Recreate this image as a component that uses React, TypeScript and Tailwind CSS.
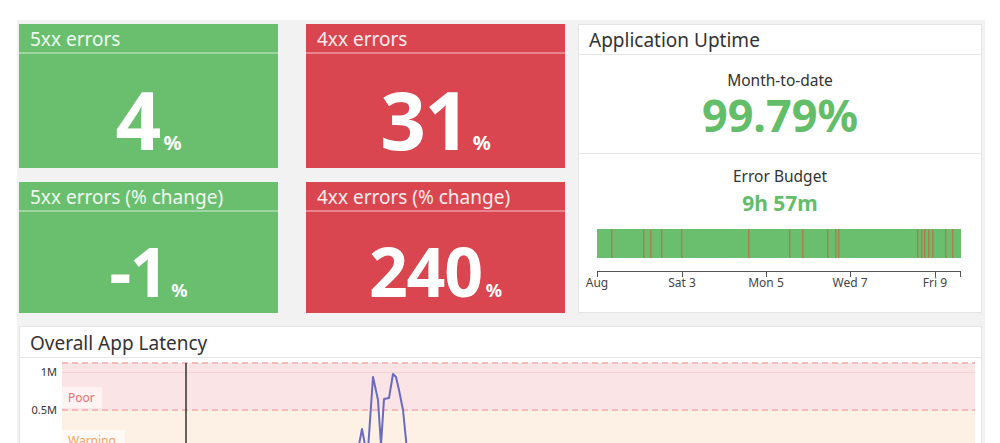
import React from "react"

const GREEN = "bg-[#6abf6e]"
const RED = "bg-[#d9464f]"

interface StatProps {
  title: string
  value: string
  color: string
  big?: boolean
}

function StatCard({ title, value, color, big }: StatProps) {
  return (
    <div className={`${color} flex flex-col text-white`}>
      <div className="h-[30px] px-[11px] pt-[2px] flex items-center text-[19px] text-white/90 border-b-2 border-white/35">
        {title}
      </div>
      <div className={`flex-1 flex items-end justify-center ${big ? "pb-[9px]" : "pb-[8px]"}`}>
        <div className="flex items-baseline">
          <span className={`font-bold leading-none tracking-[-0.02em] ${big ? "text-[80px]" : "text-[68px]"}`}>
            {value}
          </span>
          <span className={`font-bold leading-none ml-[4px] ${big ? "text-[20px]" : "text-[18px]"}`}>%</span>
        </div>
      </div>
    </div>
  )
}

const stripes = [611, 643, 650, 661, 681, 748, 789, 802, 827, 835, 838, 917, 921, 924, 928, 932, 945, 952]
const ticks = [
  { x: 597, label: "Aug" },
  { x: 682, label: "Sat 3" },
  { x: 766, label: "Mon 5" },
  { x: 850, label: "Wed 7" },
  { x: 935, label: "Fri 9" },
]

function BudgetBar() {
  const ox = 585
  return (
    <svg width="390" height="66" className="block">
      <rect x={597 - ox} y="3" width="364" height="29" fill="#6abf6e" />
      {stripes.map((s, i) => (
        <rect key={i} x={s - ox} y="3" width="1.5" height="29" fill="#a8814f" />
      ))}
      <line x1={597 - ox} y1="45.5" x2={961 - ox} y2="45.5" stroke="#555" strokeWidth="1" />
      {ticks.map((t) => (
        <g key={t.label}>
          <line x1={t.x - ox + 0.5} y1="45" x2={t.x - ox + 0.5} y2="51" stroke="#555" strokeWidth="1" />
          <text x={t.x - ox} y="61" textAnchor="middle" fontSize="12" fill="#444">
            {t.label}
          </text>
        </g>
      ))}
      <line x1={961 - ox - 0.5} y1="45" x2={961 - ox - 0.5} y2="51" stroke="#555" strokeWidth="1" />
    </svg>
  )
}

function UptimeCard() {
  return (
    <div className="w-[404px] bg-white border border-[#e4e4e4] flex flex-col text-[#333]">
      <div className="h-[30px] px-[10px] pt-[2px] flex items-center text-[19px] border-b border-[#e6e6e6]">
        Application Uptime
      </div>
      <div className="h-[99px] flex flex-col items-center pt-[15px] border-b border-[#e6e6e6]">
        <div className="text-[15.5px] leading-[20px]">Month-to-date</div>
        <div className="mt-[4px] text-[45px] leading-[42px] font-bold text-[#64bd69]">99.79%</div>
      </div>
      <div className="flex-1 flex flex-col items-center pt-[12px]">
        <div className="text-[15.5px] leading-[20px]">Error Budget</div>
        <div className="mt-[7px] text-[21px] leading-none font-bold text-[#64bd69]">9h 57m</div>
        <div className="mt-[12px] self-start ml-[6px]">
          <BudgetBar />
        </div>
      </div>
    </div>
  )
}

const latency: [number, number][] = [
  [338, 92], [342, 71], [345, 87], [348, 92], [353, 19], [358, 42], [361, 87],
  [364, 41], [369, 40], [373, 16], [376, 19], [379, 32], [383, 52], [387, 92],
]

function LatencyChart() {
  return (
    <svg width="961" height="95" className="block">
      <rect x="42" y="5" width="913" height="47" fill="#fbe4e5" />
      <rect x="42" y="52" width="913" height="43" fill="#fdf1e6" />
      <line x1="42" y1="14.5" x2="955" y2="14.5" stroke="#f0d2d3" strokeWidth="1" />
      <line x1="42" y1="5" x2="955" y2="5" stroke="#f2a9a9" strokeWidth="1.5" strokeDasharray="6 4" />
      <line x1="42" y1="52" x2="955" y2="52" stroke="#f2a9a9" strokeWidth="1.5" strokeDasharray="6 4" />
      <text x="37" y="18" textAnchor="end" fontSize="11" fill="#333">1M</text>
      <text x="37" y="56" textAnchor="end" fontSize="11" fill="#333">0.5M</text>
      <rect x="42" y="29" width="40" height="21" fill="#ffffff" fillOpacity="0.55" />
      <text x="48" y="44" fontSize="12" fill="#ee6e73">Poor</text>
      <rect x="42" y="72" width="63" height="23" fill="#ffffff" fillOpacity="0.55" />
      <text x="48" y="87" fontSize="12" fill="#f2a35e">Warning</text>
      <line x1="166" y1="5" x2="166" y2="95" stroke="#333" strokeWidth="1.5" />
      <polyline
        points={latency.map((p) => p.join(",")).join(" ")}
        fill="none"
        stroke="#6b6bbd"
        strokeWidth="2"
        strokeLinejoin="round"
      />
    </svg>
  )
}

export default function App() {
  return (
    <div className="w-[1000px] h-[443px] overflow-hidden bg-white pt-[20px] pl-[17px] font-['Noto_Sans',sans-serif]">
      <div className="w-[968px] bg-[#f2f2f2] pt-[4px] pl-[2px] pr-[3px] pb-[20px]">
        <div className="flex gap-[13px] h-[289px]">
          <div className="grid grid-cols-[259px_259px] grid-rows-[144px_131px] gap-x-[28px] gap-y-[14px]">
            <StatCard title="5xx errors" value="4" color={GREEN} big />
            <StatCard title="4xx errors" value="31" color={RED} big />
            <StatCard title="5xx errors (% change)" value="-1" color={GREEN} />
            <StatCard title="4xx errors (% change)" value="240" color={RED} />
          </div>
          <UptimeCard />
        </div>
        <div className="mt-[13px] bg-white border border-[#e4e4e4] text-[#333]">
          <div className="h-[31px] px-[10px] pt-[2px] flex items-center text-[19px] border-b border-[#e6e6e6]">
            Overall App Latency
          </div>
          <LatencyChart />
        </div>
      </div>
    </div>
  )
}
